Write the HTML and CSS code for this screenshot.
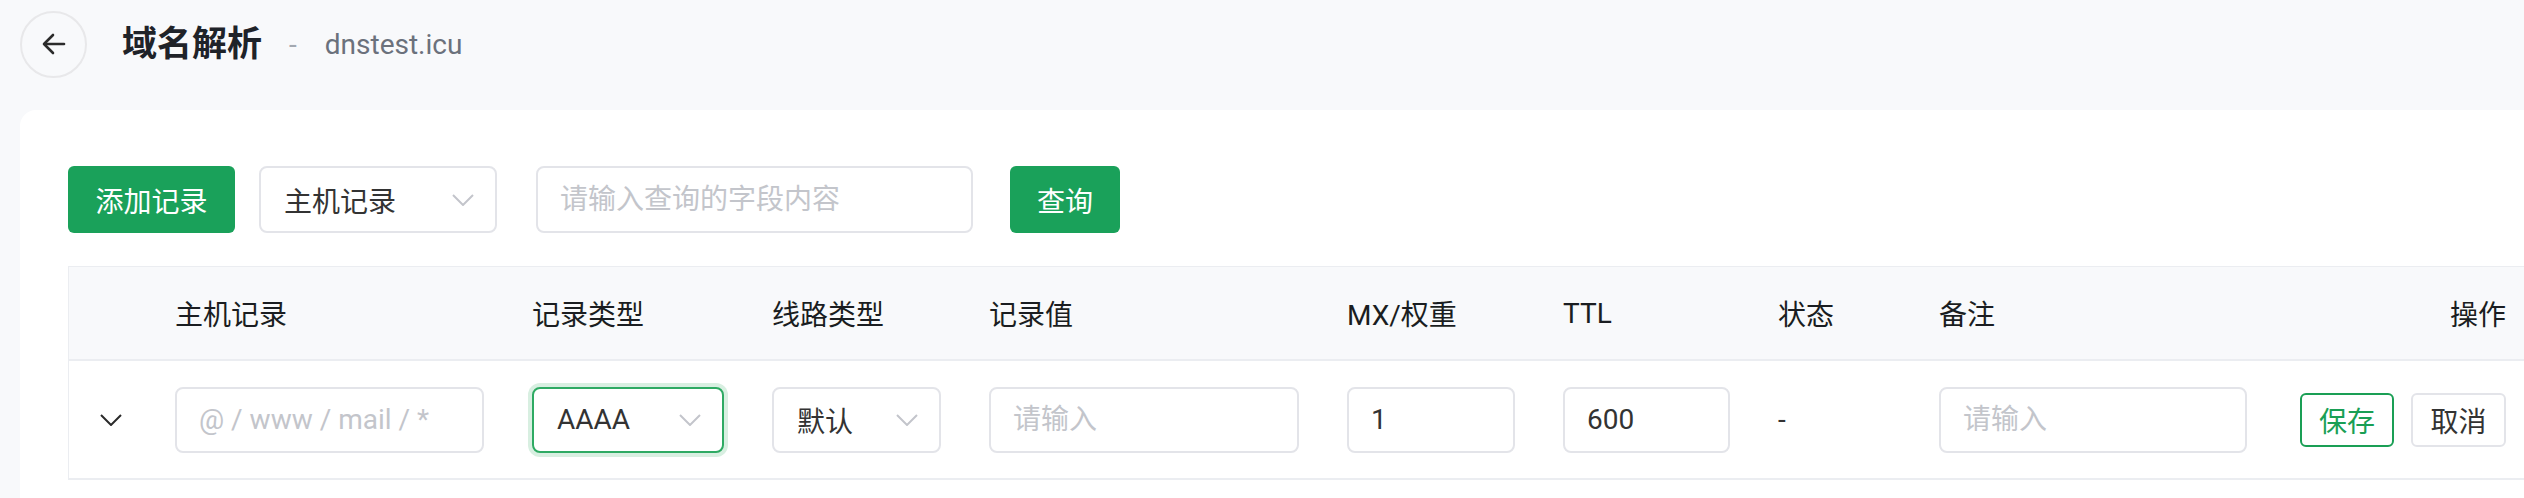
FILE: index.html
```html
<!DOCTYPE html>
<html lang="zh-CN">
<head>
<meta charset="utf-8">
<title>域名解析</title>
<link rel="stylesheet" href="styles.css">
</head>
<body>
<div class="page">
  <header class="topbar">
    <button class="back" type="button" aria-label="返回">
      <svg width="24" height="22" viewBox="0 0 24 22" fill="none" stroke="#2b2b2b" stroke-width="2.6" stroke-linecap="round" stroke-linejoin="round"><path d="M22 11H3"/><path d="M11 2L2 11l9 9"/></svg>
    </button>
    <h1 class="title">域名解析</h1>
    <span class="sep">-</span>
    <span class="domain">dnstest.icu</span>
  </header>

  <main class="card">
    <div class="toolbar">
      <button class="btn btn-primary btn-add" type="button">添加记录</button>
      <div class="select select-field">
        <span class="select-text">主机记录</span>
        <svg class="caret" width="22" height="12" viewBox="0 0 22 12" fill="none" stroke="#c3c5cb" stroke-width="2"><path d="M1 1l10 10L21 1"/></svg>
      </div>
      <input class="input input-query" type="text" placeholder="请输入查询的字段内容">
      <button class="btn btn-primary btn-query" type="button">查询</button>
    </div>

    <div class="table">
      <div class="tr thead">
        <div class="td"></div>
        <div class="td">主机记录</div>
        <div class="td">记录类型</div>
        <div class="td">线路类型</div>
        <div class="td">记录值</div>
        <div class="td">MX/权重</div>
        <div class="td">TTL</div>
        <div class="td">状态</div>
        <div class="td">备注</div>
        <div class="td td-ops">操作</div>
      </div>
      <div class="tr tbody">
        <div class="td td-expand">
          <svg width="22" height="12" viewBox="0 0 22 12" fill="none" stroke="#2b2b2b" stroke-width="2"><path d="M1 1l10 10L21 1"/></svg>
        </div>
        <div class="td"><input class="input" type="text" placeholder="@ / www / mail / *"></div>
        <div class="td">
          <div class="select focused">
            <span class="select-text">AAAA</span>
            <svg class="caret" width="22" height="12" viewBox="0 0 22 12" fill="none" stroke="#c3c5cb" stroke-width="2"><path d="M1 1l10 10L21 1"/></svg>
          </div>
        </div>
        <div class="td">
          <div class="select">
            <span class="select-text">默认</span>
            <svg class="caret" width="22" height="12" viewBox="0 0 22 12" fill="none" stroke="#c3c5cb" stroke-width="2"><path d="M1 1l10 10L21 1"/></svg>
          </div>
        </div>
        <div class="td"><input class="input" type="text" placeholder="请输入"></div>
        <div class="td"><input class="input" type="text" value="1"></div>
        <div class="td"><input class="input" type="text" value="600"></div>
        <div class="td">-</div>
        <div class="td"><input class="input" type="text" placeholder="请输入"></div>
        <div class="td td-ops">
          <button class="btn btn-save" type="button">保存</button>
          <button class="btn btn-cancel" type="button">取消</button>
        </div>
      </div>
    </div>
  </main>
</div>
</body>
</html>
```

FILE: styles.css
```css
* { box-sizing: border-box; }

html, body {
  margin: 0;
  padding: 0;
  overflow: hidden;
  background: #f8f9fb;
  font-family: Roboto, "Noto Sans CJK SC", sans-serif;
  color: #333;
}

.page {
  width: 2524px;
  height: 498px;
  overflow: hidden;
}

.topbar {
  height: 88px;
  display: flex;
  align-items: center;
  padding-left: 20px;
}

.back {
  width: 67px;
  height: 67px;
  border-radius: 50%;
  border: 2px solid #e8e8ea;
  background: #f8f9fb;
  display: flex;
  align-items: center;
  justify-content: center;
  padding: 0;
}

.title {
  margin: 0 0 0 35px;
  font-size: 35px;
  font-weight: 600;
  color: #1f2329;
  line-height: 1;
}

.sep {
  margin-left: 27px;
  font-size: 28px;
  color: #a3a8b0;
}

.domain {
  margin-left: 28px;
  font-size: 28px;
  color: #6b717c;
}

.card {
  margin: 22px 0 0 20px;
  width: 2600px;
  height: 420px;
  background: #fff;
  border-radius: 16px;
  padding: 56px 48px 0;
}

.toolbar {
  display: flex;
  align-items: center;
  height: 67px;
}

.btn {
  font-family: inherit;
  font-size: 28px;
  border-radius: 6px;
  cursor: pointer;
  padding: 0;
  display: inline-flex;
  align-items: center;
  justify-content: center;
}

.btn-primary {
  background: #1aa15a;
  color: #fff;
  border: none;
  height: 67px;
}

.btn-add {
  width: 167px;
  margin-right: 24px;
}

.btn-query {
  width: 110px;
}

.select {
  width: 100%;
  height: 66px;
  border: 2px solid #e3e4e9;
  border-radius: 8px;
  background: #fff;
  display: flex;
  align-items: center;
  justify-content: space-between;
  padding: 0 21px 0 23px;
  font-size: 28px;
  color: #333;
}

.select-field {
  width: 238px;
  height: 67px;
  margin-right: 39px;
}

.select.focused {
  border-color: #2eaa63;
  box-shadow: 0 0 0 4px #d8efe1;
}

.input {
  width: 100%;
  height: 66px;
  border: 2px solid #e3e4e9;
  border-radius: 8px;
  background: #fff;
  padding: 0 22px;
  font-family: inherit;
  font-size: 28px;
  color: #333;
  outline: none;
}

.input::placeholder {
  color: #c3c5cb;
}

.input-query {
  width: 437px;
  height: 67px;
  margin-right: 37px;
}

.table {
  margin-top: 33px;
  width: 2462px;
  border-top: 1px solid #ebedf1;
  border-left: 1px solid #ebedf1;
}

.tr {
  display: grid;
  grid-template-columns: 82px 357px 240px 217px 358px 216px 215px 161px 356px 259px;
  border-bottom: 2px solid #ebedf1;
}

.thead {
  height: 94px;
  background: #f8f9fb;
  font-size: 28px;
  font-weight: 400;
  color: #1a1d21;
}

.tbody {
  height: 119px;
  font-size: 28px;
  color: #333;
}

.td {
  display: flex;
  align-items: center;
  padding: 0 24px;
}

.td-expand {
  justify-content: center;
  padding: 0 0 0 2px;
}

.td-ops {
  justify-content: flex-end;
  padding-right: 24px;
}

.btn-save {
  width: 94px;
  height: 54px;
  background: #fff;
  border: 2px solid #1a9f55;
  color: #1a9f55;
  margin-right: 17px;
}

.btn-cancel {
  width: 95px;
  height: 54px;
  background: #fff;
  border: 2px solid #e3e4e9;
  color: #333;
}
```
